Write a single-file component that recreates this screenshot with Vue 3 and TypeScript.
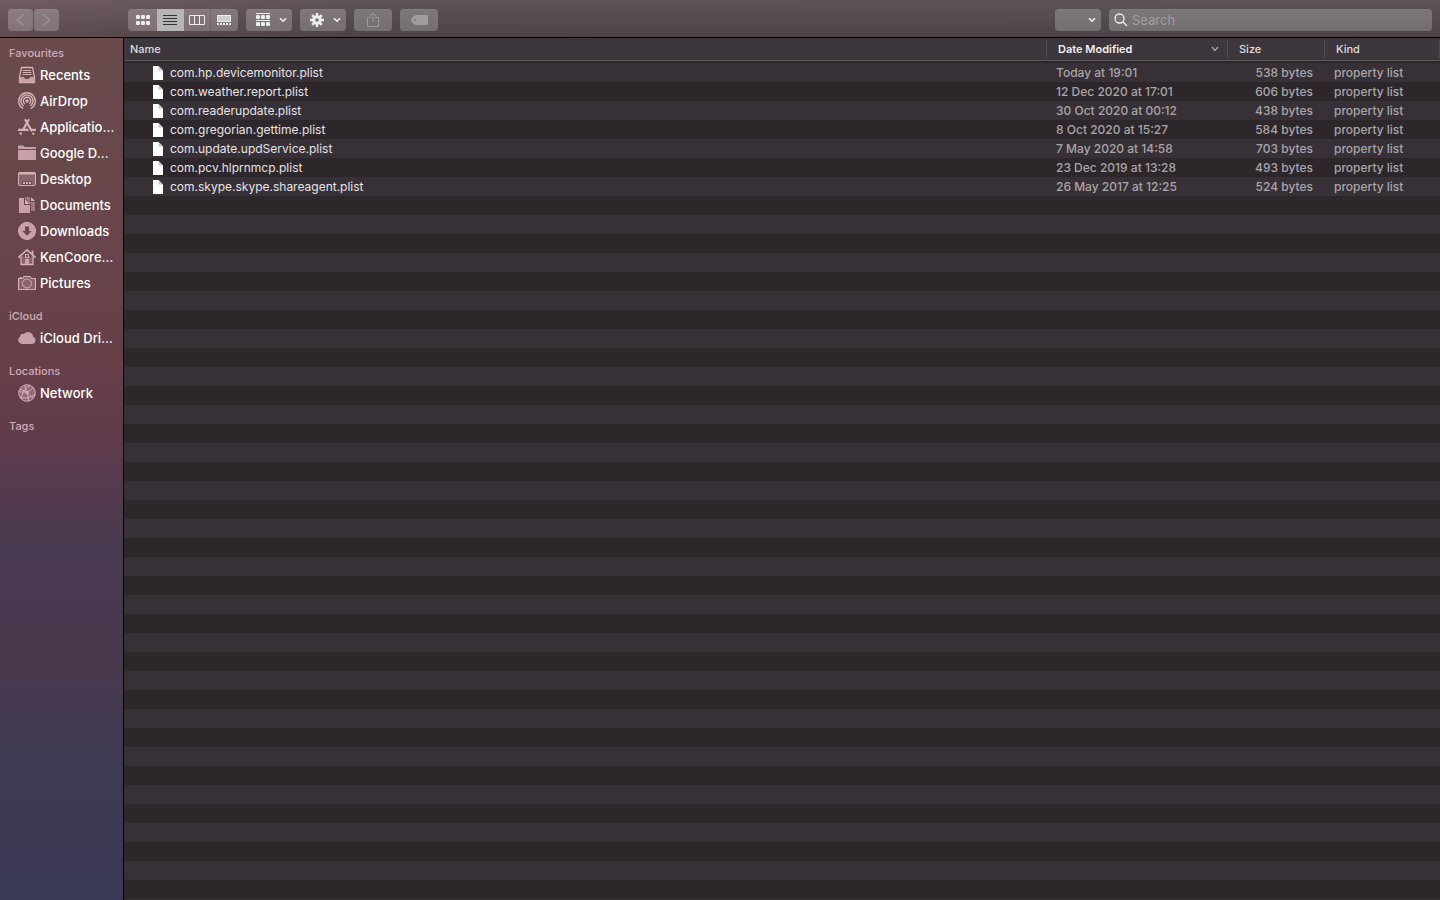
<script setup lang="ts">
import { ref } from 'vue'

interface Place { label: string; icon: string }
interface Section { title: string; places: Place[] }
interface FileRow { name: string; modified: string; size: string }

const sections: Section[] = [
  {
    title: 'Favourites',
    places: [
      { label: 'Recents', icon: 'recents' },
      { label: 'AirDrop', icon: 'airdrop' },
      { label: 'Applicatio…', icon: 'apps' },
      { label: 'Google D…', icon: 'folder' },
      { label: 'Desktop', icon: 'desktop' },
      { label: 'Documents', icon: 'documents' },
      { label: 'Downloads', icon: 'downloads' },
      { label: 'KenCoore…', icon: 'home' },
      { label: 'Pictures', icon: 'pictures' },
    ],
  },
  { title: 'iCloud', places: [{ label: 'iCloud Dri…', icon: 'cloud' }] },
  { title: 'Locations', places: [{ label: 'Network', icon: 'network' }] },
  { title: 'Tags', places: [] },
]

const files: FileRow[] = [
  { name: 'com.hp.devicemonitor.plist', modified: 'Today at 19:01', size: '538 bytes' },
  { name: 'com.weather.report.plist', modified: '12 Dec 2020 at 17:01', size: '606 bytes' },
  { name: 'com.readerupdate.plist', modified: '30 Oct 2020 at 00:12', size: '438 bytes' },
  { name: 'com.gregorian.gettime.plist', modified: '8 Oct 2020 at 15:27', size: '584 bytes' },
  { name: 'com.update.updService.plist', modified: '7 May 2020 at 14:58', size: '703 bytes' },
  { name: 'com.pcv.hlprnmcp.plist', modified: '23 Dec 2019 at 13:28', size: '493 bytes' },
  { name: 'com.skype.skype.shareagent.plist', modified: '26 May 2017 at 12:25', size: '524 bytes' },
]

const views = ['icons', 'list', 'columns', 'gallery']
const view = ref('list')
const query = ref('')
</script>

<template>
  <div class="window">
    <header class="toolbar">
      <div class="nav">
        <button class="btn nav-btn" disabled aria-label="Back">
          <svg width="9" height="14" viewBox="0 0 9 14"><path d="M7.5 1.5 1.5 7l6 5.5" class="dim-line" /></svg>
        </button>
        <button class="btn nav-btn" disabled aria-label="Forward">
          <svg width="9" height="14" viewBox="0 0 9 14"><path d="M1.5 1.5 7.5 7l-6 5.5" class="dim-line" /></svg>
        </button>
      </div>
      <div class="segments" role="group" aria-label="View">
        <button
          v-for="v in views" :key="v" class="segment" :class="{ active: view === v }"
          :aria-label="v" :aria-pressed="view === v" @click="view = v"
        >
          <svg v-if="v === 'icons'" width="16" height="12" viewBox="0 0 16 12" class="solid">
            <rect x="1" y="1" width="4" height="4" rx="1" /><rect x="6" y="1" width="4" height="4" rx="1" /><rect x="11" y="1" width="4" height="4" rx="1" />
            <rect x="1" y="7" width="4" height="4" rx="1" /><rect x="6" y="7" width="4" height="4" rx="1" /><rect x="11" y="7" width="4" height="4" rx="1" />
          </svg>
          <svg v-else-if="v === 'list'" width="14" height="10" viewBox="0 0 14 10">
            <path d="M0 .5h14M0 3.5h14M0 6.5h14M0 9.5h14" stroke="#353033" />
          </svg>
          <svg v-else-if="v === 'columns'" width="16" height="10" viewBox="0 0 16 10">
            <path d="M.5 .5h15v9H.5zM5.5.5v9M10.5 .5v9" fill="none" stroke="#ededed" />
          </svg>
          <svg v-else width="14" height="10" viewBox="0 0 14 10">
            <rect x=".5" y=".5" width="13" height="6" fill="#d0cecf" stroke="#ededed" />
            <path d="M0 9h14" stroke="#ededed" stroke-width="2" stroke-dasharray="2 1" />
          </svg>
        </button>
      </div>
      <button class="btn menu-btn" aria-label="Group by" aria-haspopup="menu">
        <svg width="14" height="14" viewBox="0 0 14 14" class="solid">
          <rect width="14" height="1" /><rect y="7" width="14" height="1" />
          <rect y="2" width="4" height="4" rx="1" /><rect x="5" y="2" width="4" height="4" rx="1" /><rect x="10" y="2" width="4" height="4" rx="1" />
          <rect y="9" width="4" height="4" rx="1" /><rect x="5" y="9" width="4" height="4" rx="1" /><rect x="10" y="9" width="4" height="4" rx="1" />
        </svg>
        <svg width="8" height="6" viewBox="0 0 8 6"><path d="M1 1.2 4 4.200l3-3" class="chev" /></svg>
      </button>
      <button class="btn menu-btn" aria-label="Actions" aria-haspopup="menu">
        <svg width="14" height="14" viewBox="0 0 14 14">
          <g stroke="#ededed" stroke-width="2.4">
            <path d="M7 0v3.500M7 10.500V14M0 7h3.500M10.500 7H14M2.100 2.100l2.500 2.500M9.400 9.400l2.500 2.500M2.100 11.900l2.500-2.500M9.400 4.600l2.500-2.500" />
          </g>
          <circle cx="7" cy="7" r="3.3" fill="none" stroke="#ededed" stroke-width="3" />
        </svg>
        <svg width="8" height="6" viewBox="0 0 8 6"><path d="M1 1.2 4 4.200l3-3" class="chev" /></svg>
      </button>
      <button class="btn wide-btn" disabled aria-label="Share">
        <svg width="12" height="16" viewBox="0 0 12 16">
          <path d="M4 5.500H.5v9h11v-9H8M6 10V1M3 4l3-3 3 3" fill="none" stroke="#9d999b" />
        </svg>
      </button>
      <button class="btn wide-btn" disabled aria-label="Edit tags">
        <svg width="17" height="10" viewBox="0 0 17 10">
          <path fill-rule="evenodd" d="M5 0h10.500A1.500 1.500 0 0 1 17 1.500v7a1.500 1.500 0 0 1-1.500 1.500H5C3 10 0 6.500 0 5s3-5 5-5zM4 4a1 1 0 1 0 0 2 1 1 0 0 0 0-2z" fill="#a19d9f" />
        </svg>
      </button>
      <span class="spacer"></span>
      <div class="popup">
        <select aria-label="Search scope"><option value=""></option></select>
        <svg width="8" height="6" viewBox="0 0 8 6"><path d="M1 1.2 4 4.200l3-3" class="chev" /></svg>
      </div>
      <label class="search">
        <svg width="14" height="14" viewBox="0 0 14 14"><circle cx="5.5" cy="5.5" r="4.500" class="lens" /><path d="m9 9 4 4" class="lens" /></svg>
        <input v-model="query" type="text" placeholder="Search" aria-label="Search" />
      </label>
    </header>

    <div class="body">
      <nav class="sidebar" aria-label="Sidebar">
        <section v-for="s in sections" :key="s.title">
          <h2>{{ s.title }}</h2>
          <ul v-if="s.places.length">
            <li v-for="p in s.places" :key="p.label">
              <a href="#">
                <svg width="18" height="18" viewBox="0 0 18 18">
                  <g v-if="p.icon === 'recents'">
                    <path d="M3.500 1.500h11l2 9.500v5.500h-15V11z" class="o" stroke-width="1.300" stroke-linejoin="round" />
                    <path d="M5 4.500h8M4.500 6.500h9M4.500 8.500h9" class="o" stroke-width="1.200" />
                    <path d="M1.500 11H6c.4 1.400 1.400 2 3 2s2.600-.6 3-2h4.500v4.500a1 1 0 0 1-1 1h-13a1 1 0 0 1-1-1z" class="m" />
                  </g>
                  <g v-else-if="p.icon === 'airdrop'" class="o" stroke-width="1.4">
                    <path d="M5.200 16.500a8.300 8.300 0 1 1 7.600 0M5.800 14a6 6 0 1 1 6.400 0M6.800 11.900a3.700 3.700 0 1 1 4.400 0" />
                    <circle cx="9" cy="9" r="1" class="f" />
                  </g>
                  <g v-else-if="p.icon === 'apps'" class="o" stroke-width="2.200">
                    <path d="m7 1.300 7 12.200M14.800 14.800l1 1.700M11 1.300 5.200 11.500M3.300 14.500l-1.200 2" /><path d="M0 11.900h10.500M13 11.900h5" />
                  </g>
                  <g v-else-if="p.icon === 'folder'">
                    <path d="M0 2.500a1 1 0 0 1 1-1h4.500L7 3h10a1 1 0 0 1 1 1v1H0z" class="m" /><path d="M0 6h18v9a1 1 0 0 1-1 1H1a1 1 0 0 1-1-1z" class="m" />
                  </g>
                  <g v-else-if="p.icon === 'desktop'">
                    <rect x=".5" y="2.500" width="17" height="13" rx="1" class="t" /><path d="M1 3.500h16" class="o" stroke-width="2" />
                    <path d="M4 11h10v4H4z" fill="#69494c" /><path d="M5 13h2M8 13h2M11 13h2" class="o" stroke-width="2" />
                  </g>
                  <g v-else-if="p.icon === 'documents'">
                    <path d="M7 1h5v5h5v9h-4V8L8 3H7z" class="d" /><path d="M13 1l4 4h-4z" class="s" />
                    <path d="M1 2h5v7h6v8H1z" class="m" /><path d="M7 3l5 5H7z" class="s" />
                  </g>
                  <g v-else-if="p.icon === 'downloads'">
                    <circle cx="9" cy="9" r="8.500" class="m2" /><path d="M7 4.500h4V9h2.700L9 13.800 4.300 9H7z" fill="#69494c" />
                  </g>
                  <g v-else-if="p.icon === 'home'">
                    <path d="M3 8.500v8h12v-8" class="t" stroke-width="1.300" /><path d="M.5 9.500 9 1.800l8.500 7.700M14.500 6.500V2.500" class="o" stroke-width="1.700" />
                    <rect x="7.500" y="6.500" width="3" height="3" class="o" /><rect x="7" y="11" width="4" height="5" class="m" />
                  </g>
                  <g v-else-if="p.icon === 'pictures'">
                    <path d="M.5 4.500h4l1.500-2h6l1.500 2h4v11H.5z" class="t" stroke-width="1.200" /><circle cx="9" cy="9.500" r="4.500" class="cam" /><path d="M1.500 3.500h2" class="o" />
                  </g>
                  <path v-else-if="p.icon === 'cloud'" d="M4 15a4 4 0 0 1-2-7.300A3 3 0 0 1 6 5a5 5 0 0 1 9 2.500A3.900 3.900 0 0 1 14 15z" class="m" />
                  <g v-else>
                    <circle cx="9" cy="9" r="8.300" class="net" />
                    <path d="M1 7.500c5 1.500 11 1 14-4M3.500 15C4 9 7 4 12 1.500M7 1.200c0 5 3 10 8 12M2 13c5 2 11 1 15-3M9.500 9l1 8M9 8l-7-3" class="o" />
                    <circle cx="9" cy="8.500" r="1.500" class="f" />
                  </g>
                </svg>
                <span>{{ p.label }}</span>
              </a>
            </li>
          </ul>
        </section>
      </nav>

      <main class="list">
        <table>
          <colgroup><col /><col class="c-date" /><col class="c-size" /><col class="c-kind" /></colgroup>
          <thead>
            <tr>
              <th class="h-name"><span>Name</span></th>
              <th class="h-date" aria-sort="descending">
                <span>Date Modified<svg width="8" height="6" viewBox="0 0 8 6"><path d="M1 1 4 4.500 7 1" fill="none" stroke="#aaa6a8" stroke-width="1.2" /></svg></span>
              </th>
              <th><span>Size</span></th>
              <th><span>Kind</span></th>
            </tr>
          </thead>
          <tbody>
            <tr v-for="f in files" :key="f.name">
              <td class="name">
                <div>
                  <svg width="10" height="14" viewBox="0 0 10 14"><path d="M0 0h5.500L10 4.500V14H0z" fill="#fff" /><path d="M5.500 0 10 4.500H5.500z" fill="#c9c7c8" /></svg>
                  {{ f.name }}
                </div>
              </td>
              <td>{{ f.modified }}</td>
              <td class="size">{{ f.size }}</td>
              <td>property list</td>
            </tr>
          </tbody>
        </table>
      </main>
    </div>
  </div>
</template>

<style>
body { margin: 0; background: #2d272c; }
</style>

<style scoped>
* { box-sizing: border-box; }
.window {
  display: flex;
  flex-direction: column;
  min-height: 100vh;
  font-family: Inter, "Liberation Sans", sans-serif;
  font-size: 12px;
  color: #dfdddf;
}
svg { display: block; flex: none; }
button, input, select { font: inherit; color: inherit; border: 0; margin: 0; padding: 0; }
.toolbar {
  display: flex;
  align-items: center;
  height: 38px;
  padding: 2px 8px 0;
  gap: 8px;
  border-bottom: 1px solid #000;
  background:
    linear-gradient(rgba(255, 255, 255, .04), rgba(0, 0, 0, .12)),
    linear-gradient(90deg, #6b555a, #574d52 360px, #554c51);
}
.nav { display: flex; gap: 1px; margin-right: 61px; }
.btn, .segments, .popup select, .search {
  height: 22px;
  border-radius: 4px;
  background: rgba(255, 255, 255, .22);
  box-shadow: inset 0 1px rgba(255, 255, 255, .05);
}
.btn { display: flex; align-items: center; justify-content: center; }
.nav-btn { width: 25px; }
.wide-btn { width: 38px; }
.menu-btn { width: 46px; justify-content: space-between; padding: 0 5px 0 10px; }
.dim-line { fill: none; stroke: #9b9598; stroke-width: 1.5; }
.chev { fill: none; stroke: #f1f1f1; stroke-width: 1.6; }
.solid { fill: #ededed; }
.segments { display: flex; overflow: hidden; }
.segment {
  display: flex;
  align-items: center;
  justify-content: center;
  width: 27px;
  background: none;
  border-right: 1px solid rgba(60, 50, 55, .2);
}
.segment:first-child { width: 29px; border-right: 0; }
.segment:last-child { border-right-color: transparent; }
.segment.active { background: #b8b5b7; border-color: #b8b5b7; }
.spacer { flex: 1; }
.popup { display: grid; align-items: center; justify-items: end; }
.popup > * { grid-area: 1 / 1; }
.popup select { width: 46px; appearance: none; }
.popup svg { margin-right: 5px; pointer-events: none; }
.search { display: flex; align-items: center; width: 323px; padding: 0 5px; gap: 4px; font-size: 13px; }
.search input { flex: 1; min-width: 0; background: none; outline: 0; }
.search input::placeholder { color: #a39ea1; opacity: 1; }
.lens { fill: none; stroke: #f0eff0; stroke-width: 1.3; }

.body { display: flex; flex: 1; }
.sidebar {
  width: 124px;
  flex: none;
  padding-top: 6px;
  border-right: 1px solid #000;
  background: linear-gradient(#694a4d 0, #68464b 22%, #663f49 38%, #5e3b4b 47%, #543a4e 53%, #483a51 59%, #49394f 73%, #433a50 79%, #3d3a52 86%, #393856 100%);
}
.sidebar h2 {
  margin: 0;
  padding-left: 9px;
  font-size: 11px;
  line-height: 18px;
  font-weight: 500;
  color: #d0adb4;
}
.sidebar ul { margin: 0 0 11px; padding: 0; list-style: none; }
.sidebar a {
  display: flex;
  align-items: center;
  gap: 4px;
  height: 26px;
  padding-left: 18px;
  font-size: 13px;
  font-weight: 500;
  color: #fff;
  text-decoration: none;
  white-space: nowrap;
}
.o { fill: none; stroke: #d5b0b6; }
.f, .s { fill: #d5b0b6; }
.m { fill: #c8a1a8; }
.m2 { fill: #c8a1a8; stroke: #d5b0b6; }
.t { fill: rgba(213, 176, 182, .3); stroke: #d5b0b6; }
.d { fill: rgba(213, 176, 182, .5); }
.cam { fill: #8c666c; stroke: #d5b0b6; }
.net { fill: rgba(213, 176, 182, .4); stroke: #d5b0b6; }

.list {
  flex: 1;
  min-width: 0;
  background: repeating-linear-gradient(#373036 0 19px, #2d272c 19px 38px) 0 25px no-repeat, #2d272c;
}
table { width: 100%; table-layout: fixed; border-collapse: separate; border-spacing: 0; }
.c-date { width: 181px; }
.c-size { width: 97px; }
.c-kind { width: 115px; }
th {
  height: 23px;
  padding: 0 0 1px;
  background: #3d363c;
  border-bottom: 1px solid #5e575c;
  font-size: 11px;
  line-height: 18px;
  font-weight: 500;
  text-align: left;
}
th span {
  display: flex;
  align-items: center;
  justify-content: space-between;
  padding: 0 8px 0 11px;
  border-right: 1px solid #524b50;
}
.h-name span { padding-left: 6px; }
.h-date { font-weight: 600; color: #f0eff0; }
tbody::before { content: ""; display: table-row; height: 2px; }
td {
  height: 19px;
  padding: 0 0 0 9px;
  line-height: 19px;
  font-weight: 500;
  color: #a9a5a8;
  white-space: nowrap;
}
td.name { padding-left: 29px; font-weight: 400; color: #e6e4e6; }
td.name div { display: flex; align-items: center; gap: 7px; height: 19px; }
td.size { padding: 0 12px 0 0; text-align: right; }
</style>
